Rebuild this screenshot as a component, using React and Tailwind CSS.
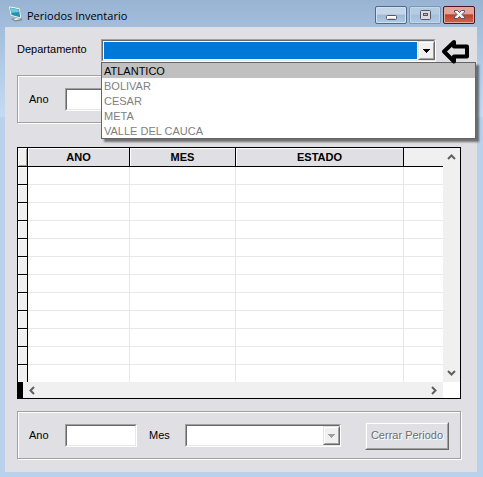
import React from "react";

const departments = ["ATLANTICO", "BOLIVAR", "CESAR", "META", "VALLE DEL CAUCA"];
const rows = Array.from({ length: 12 }, (_, i) => i);

const sunken =
  "border border-t-[#a0a0a0] border-l-[#a0a0a0] border-b-white border-r-white";
const sunkenInner =
  "border border-t-[#696969] border-l-[#696969] border-b-[#e8e8e8] border-r-[#e8e8e8]";
const raised =
  "border border-t-[#e3e3e3] border-l-[#e3e3e3] border-b-[#696969] border-r-[#696969]";
const raisedInner =
  "border border-t-white border-l-white border-b-[#a0a0a0] border-r-[#a0a0a0]";

function Chevron({ d }) {
  return (
    <svg width="9" height="9" viewBox="0 0 9 9" fill="none" stroke="#606060" strokeWidth="2" aria-hidden="true">
      <path d={d} />
    </svg>
  );
}

function AppIcon() {
  return (
    <svg width="15" height="17" viewBox="0 0 15 17" className="shrink-0" aria-hidden="true">
      <path d="M3 14 L10 11.5 L14 13.5 V15.5 L7 16.5 Z" fill="#7f8a90" />
      <path d="M5 14 L10 12.5 L13 14 L7.5 15.2 Z" fill="#e6e8e6" />
      <path d="M.5 2 L2 1 L12 3 L13.5 12.5 L12 13.5 L2.5 11 Z" fill="#f4fafb" stroke="#94adbb" strokeWidth=".7" />
      <path d="M2 2.5 L11 4.2 L12.2 12.3 L3.6 10 Z" fill="#2392b0" />
      <path d="M2.5 3 L10.5 4.6 L11 7 L3.4 7.8 Z" fill="#73c9d8" />
    </svg>
  );
}

function TitleBar() {
  return (
    <header className="flex h-[27px] shrink-0 items-center pr-2 pl-2">
      <AppIcon />
      <h1 className="ml-1 flex-1 pt-1 font-['Open_Sans','Noto_Sans',sans-serif] text-[11px] leading-4 text-black">
        Periodos Inventario
      </h1>
      <div className="flex gap-[2px] pt-[3px]">
        <button type="button" aria-label="Minimizar" className="flex h-[18px] w-8 items-center justify-center rounded-[2px] border border-[#4f6987] bg-linear-to-b from-[#c4d6e8] from-45% via-[#9db9d5] via-50% to-[#b1cae4] shadow-[inset_0_0_0_1px_#d2e2f2]">
          <svg width="11" height="10" viewBox="0 0 11 10" aria-hidden="true">
            <rect x=".5" y="5.5" width="10" height="4" rx="1" fill="#fff" stroke="#535666" />
            <path d="M2 8.5h7" stroke="#d4d4d8" />
          </svg>
        </button>
        <button type="button" aria-label="Maximizar" className="flex h-[18px] w-8 items-center justify-center rounded-[2px] border border-[#7c96b3] bg-linear-to-b from-[#b5cbe2] from-45% via-[#a3bfdb] via-50% to-[#b1cae4] shadow-[inset_0_0_0_1px_#c3d7ea]">
          <svg width="11" height="10" viewBox="0 0 11 10" aria-hidden="true">
            <rect x=".5" y=".5" width="10" height="9" rx="1" fill="#dcdce0" stroke="#535666" />
            <rect x="3.5" y="3.5" width="4" height="2" fill="#a8c0da" stroke="#535666" />
          </svg>
        </button>
        <button type="button" aria-label="Cerrar" className="flex h-[18px] w-8 items-center justify-center rounded-[2px] border border-[#4d1520] bg-linear-to-b from-[#e5a498] from-40% via-[#bd402c] via-50% to-[#ca6850] shadow-[inset_0_0_0_1px_#e5a79a]">
          <svg width="11" height="10" viewBox="0 0 11 10" aria-hidden="true">
            <path d="M.5 .5H3.5L5.5 2.5L7.5 .5H10.5V2L8 4.5L10.5 7V8.5H7.5L5.5 6.5L3.5 8.5H.5V7L3 4.5L.5 2Z" fill="#f1f1f3" stroke="#535666" />
          </svg>
        </button>
      </div>
    </header>
  );
}

function DropMark({ muted }) {
  return (
    <span className={`pointer-events-none absolute top-px right-0 h-[19px] w-[17px] ${raised}`}>
      <span className={`flex h-full items-center justify-center bg-[#f0f0f0] ${raisedInner}`}>
        <svg width="7" height="4" viewBox="0 0 7 4" aria-hidden="true" shapeRendering="crispEdges">
          <path d="M0 0H7V1H6V2H5V3H4V4H3V3H2V2H1V1H0Z" fill={muted ? "#a0a0a0" : "#000"} />
        </svg>
      </span>
    </span>
  );
}

function DepartmentField() {
  return (
    <div className="flex items-start pr-2 pl-3">
      <label htmlFor="departamento" className="w-[84px] shrink-0 pt-1 leading-[13px]">
        Departamento
      </label>
      <div className={`relative h-[23px] flex-1 ${sunken}`}>
        <div className={`h-full bg-white p-px ${sunkenInner}`}>
          <select
            id="departamento"
            defaultValue=""
            className="block h-full w-[calc(100%-16px)] appearance-none rounded-none bg-[#0078d7] px-1 text-white outline-none"
          >
            <option value="" aria-label="Sin seleccionar" />
            {departments.map((name) => (
              <option key={name}>{name}</option>
            ))}
          </select>
        </div>
        <DropMark />
        <ul
          role="listbox"
          aria-label="Departamento"
          className="absolute top-[22px] -right-[41px] -left-px z-10 border border-[#646464] bg-white shadow-[3px_3px_2px_#00000080]"
        >
          {departments.map((name, i) => (
            <li
              key={name}
              role="option"
              aria-selected={i === 0}
              className={`h-[15px] px-[2px] leading-[16px] ${i === 0 ? "bg-[#c0c0c0] text-black" : "text-[#808080]"}`}
            >
              {name}
            </li>
          ))}
        </ul>
      </div>
      <svg width="28" height="26" viewBox="0 0 28 26" className="relative z-20 ml-[5px] shrink-0" fill="none" stroke="#000" strokeWidth="4" strokeLinejoin="round" aria-hidden="true">
        <path d="M3 12.5L13 3V7.5H26V17.5H13V22.5Z" />
      </svg>
    </div>
  );
}

function PeriodGroup({ id, children }) {
  return (
    <section className="mr-4 ml-3 border border-[#a0a0a0] shadow-[1px_1px_0_#fff,inset_1px_1px_0_#fff]">
      <div className="flex h-[46px] items-center pt-px pr-[11px] pl-[11px]">
        <label htmlFor={id} className="w-9 shrink-0">
          Ano
        </label>
        <div className={`h-[23px] w-[72px] shrink-0 ${sunken}`}>
          <input id={id} type="text" className={`block h-full w-full bg-white px-1 outline-none ${sunkenInner}`} />
        </div>
        {children}
      </div>
    </section>
  );
}

function Grid() {
  const head =
    "h-[19px] border-r border-b border-black bg-[#e0dfe4] p-0 text-center text-[11px] leading-[17px] font-bold shadow-[inset_1px_1px_0_#fff]";
  const cell = "border-r border-b border-[#e8e8e8] p-0";
  return (
    <section className="mr-4 ml-3 border border-black bg-white">
      <div className="flex">
        <table className="min-w-0 flex-1 table-fixed border-separate border-spacing-0">
          <colgroup>
            <col className="w-[10px]" />
            <col className="w-[102px]" />
            <col className="w-[106px]" />
            <col className="w-[168px]" />
            <col />
          </colgroup>
          <thead>
            <tr>
              <td className="border-r border-b border-black bg-[#f0f0f0] p-0 shadow-[inset_1px_1px_0_#fff,inset_-1px_-1px_0_#a0a0a0]" />
              <th scope="col" className={head}>ANO</th>
              <th scope="col" className={head}>MES</th>
              <th scope="col" className={head}>ESTADO</th>
              <td className="border-b border-black bg-[#f0f0f0] p-0" />
            </tr>
          </thead>
          <tbody>
            {rows.map((row) => (
              <tr key={row} className="h-[18px] last:h-[17px] last:[&>td]:border-b-0">
                <td className="border-r border-b border-black bg-[#f0f0f0] p-0 shadow-[inset_1px_1px_0_#fff]" />
                <td className={cell} />
                <td className={cell} />
                <td className={cell} />
                <td className="border-b border-[#e8e8e8] p-0" />
              </tr>
            ))}
          </tbody>
        </table>
        <div className="flex w-[17px] shrink-0 flex-col items-center justify-between bg-[#f0f0f0] py-1">
          <Chevron d="M1 7L4.5 3.5L8 7" />
          <Chevron d="M1 2L4.5 5.5L8 2" />
        </div>
      </div>
      <div className="flex h-[16px]">
        <div className="w-[5px] bg-black" />
        <div className="flex flex-1 items-center justify-between bg-[#f0f0f0] px-1">
          <Chevron d="M7 1L3.5 4.5L7 8" />
          <Chevron d="M2 1L5.5 4.5L2 8" />
        </div>
        <div className="w-[17px]" />
      </div>
    </section>
  );
}

export default function App() {
  return (
    <div className="flex min-h-screen flex-col bg-[linear-gradient(to_bottom,#98b4d2_0px,#a3bfdd_30px,#c6dbf2_116px,#b9d1ea_118px)] font-['Liberation_Sans',Arial,sans-serif] text-[11px] text-black">
      <TitleBar />
      <main className="mr-[6px] mb-[5px] ml-[5px] flex-1 bg-[#e0dfe4] pt-3 pb-3">
        <DepartmentField />
        <div className="mt-[10px]">
          <PeriodGroup id="ano-consulta" />
        </div>
        <div className="mt-6">
          <Grid />
        </div>
        <div className="mt-3">
          <PeriodGroup id="ano-cierre">
            <label htmlFor="mes" className="ml-3 w-9 shrink-0">
              Mes
            </label>
            <div className={`relative h-[23px] min-w-0 flex-1 ${sunken}`}>
              <select id="mes" disabled className={`block h-full w-full appearance-none rounded-none bg-white opacity-100 ${sunkenInner}`} />
              <DropMark muted />
            </div>
            <div className={`ml-6 h-7 w-[84px] shrink-0 ${raised}`}>
              <button type="button" disabled className={`block h-full w-full bg-[#e0dfe4] text-[#6d6d6d] [text-shadow:1px_1px_0_#fff] ${raisedInner}`}>
                Cerrar Periodo
              </button>
            </div>
          </PeriodGroup>
        </div>
      </main>
    </div>
  );
}
